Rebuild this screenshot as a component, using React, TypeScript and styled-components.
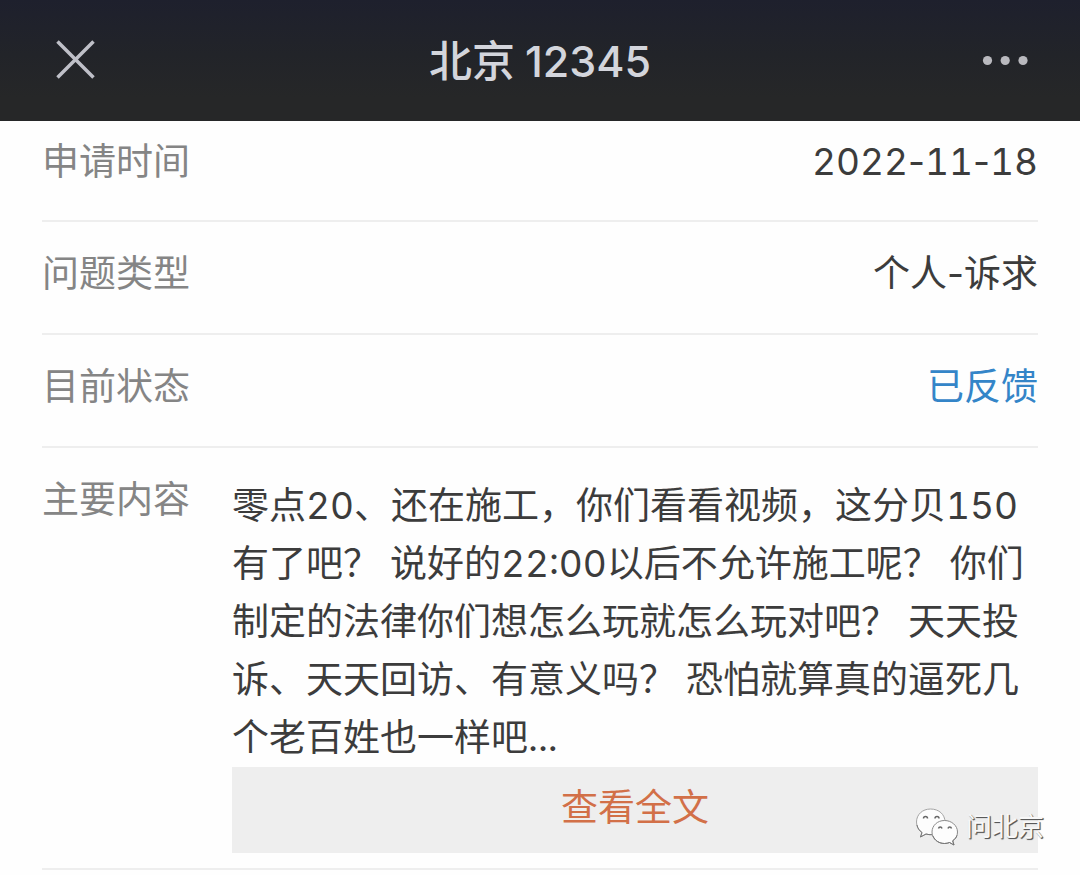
import React from "react";
import styled, { createGlobalStyle } from "styled-components";

const GlobalStyle = createGlobalStyle`
  * { box-sizing: border-box; }
  body {
    margin: 0;
    background: #fefefe;
    color: #3c3c3c;
    font-family: Inter, "Noto Sans CJK SC", sans-serif;
    font-size: 37px;
    line-height: 56px;
  }
`;

const Header = styled.header`
  display: grid;
  grid-template-columns: 1fr auto 1fr;
  align-items: center;
  height: 121px;
  padding: 0 48px;
  background: linear-gradient(#1e202d 0, #222429 45%, #262728 80%);
  color: #d3d5dc;
`;

const Title = styled.h1`
  display: flex;
  gap: 10px;
  margin: 0;
  font-size: 43px;
  line-height: 60px;
  font-weight: 500;
`;

const IconButton = styled.button<{ $end?: boolean }>`
  display: flex;
  justify-self: ${(p) => (p.$end ? "end" : "start")};
  padding: 0;
  border: 0;
  background: none;
  color: ${(p) => (p.$end ? "#b9b9be" : "#bfc0c8")};
  cursor: pointer;
`;

const Details = styled.dl`
  margin: 0;
  padding: 0 42px;
`;

const Row = styled.div<{ $first?: boolean }>`
  display: flex;
  justify-content: space-between;
  padding: ${(p) => (p.$first ? "13px 0 30px" : "24px 0 31px")};
  border-bottom: 2px solid #eeeeee;
`;

const ContentRow = styled(Row)`
  padding-bottom: 15px;
  gap: 42px;
`;

const Label = styled.dt`
  flex: none;
  color: #858585;
`;

const Value = styled.dd<{ $accent?: boolean }>`
  margin: 0;
  color: ${(p) => (p.$accent ? "#3485c8" : "inherit")};
`;

const Digits = styled.span`
  font-variant-numeric: tabular-nums;
`;

const Content = styled.dd`
  position: relative;
  flex: 1;
  margin: 0;
  padding-top: 5px;
`;

const Message = styled.p`
  margin: 0;
  line-height: 58px;
  font-variant-numeric: tabular-nums;
`;

const MoreButton = styled.button`
  display: block;
  width: 100%;
  height: 86px;
  padding: 0 0 4px;
  border: 0;
  background: #eeeeee;
  color: #d27048;
  font: inherit;
  cursor: pointer;
`;

const Watermark = styled.div`
  position: absolute;
  right: -6px;
  bottom: 6px;
  display: flex;
  align-items: center;
  gap: 7px;
  color: #f8f8f8;
  font-size: 26px;
  line-height: 40px;
  text-shadow: 1px 1px 1px #555555, 1px 1px 0 #777777;
  pointer-events: none;
`;

const WeChatIcon = () => (
  <svg width="44" height="38" viewBox="0 0 44 38" aria-hidden="true">
    <g fill="#777777" stroke="#777777" strokeWidth="1" strokeLinejoin="round">
      <path d="M15.500 1C7.500 1 1.500 6.500 1.500 14c0 4.500 2 8 5.500 10.500L5.500 29l5.500-3c2 .6 4 .8 6 .7C26 26.500 30 20 30 14 30 6.500 24 1 15.500 1z" fill="#fdfdfd" stroke="#a4a4a4" />
      <path d="M2 17c.6 3.200 2.300 5.700 5 7.500L5.500 29l5.500-3c2 .6 4 .8 6 .7" fill="none" />
      <path d="M29.500 12.500C22.500 12.500 17 17.500 17 24s5.500 11.500 12.500 11.500c2 0 3.500-.4 5-1l4.500 2.500-1.300-4.200c3-2 4.800-5 4.800-8.800 0-6.500-6-11.500-13-11.500z" fill="#fdfdfd" stroke="#8a8a8a" />
      <path d="M18 28c2 4.600 6.300 7.500 11.500 7.500 2 0 3.500-.4 5-1l4.500 2.500-1.300-4.200c2-1.300 3.500-3.100 4.300-5.300" fill="none" />
    </g>
    <g fill="none" stroke="#666666" strokeWidth="1.500">
      <path d="M8.500 10.500a2 2 0 0 1 4 0M20 10.500a2 2 0 0 1 4 0" />
      <path d="M23.500 20.500a1.800 1.800 0 0 1 3.500 0M33 20.500a1.800 1.800 0 0 1 3.500 0" />
    </g>
  </svg>
);

export default function App() {
  return (
    <div lang="zh-CN">
      <GlobalStyle />
      <Header>
        <IconButton type="button" aria-label="关闭">
          <svg width="56" height="56" viewBox="0 0 56 56" aria-hidden="true">
            <path d="M9.500 8.500l36 36M45.500 8.500l-36 36" stroke="currentColor" strokeWidth="3.500" />
          </svg>
        </IconButton>
        <Title>
          <span>北京</span>
          <span>12345</span>
        </Title>
        <IconButton type="button" aria-label="更多" $end>
          <svg width="56" height="56" viewBox="0 0 56 56" fill="currentColor" aria-hidden="true">
            <circle cx="11.500" cy="27.500" r="4.600" />
            <circle cx="29.200" cy="27.500" r="4.600" />
            <circle cx="47" cy="27.500" r="4.600" />
          </svg>
        </IconButton>
      </Header>
      <main>
        <Details>
          <Row $first>
            <Label>申请时间</Label>
            <Value>
              <time dateTime="2022-11-18">
                <Digits>2022</Digits>-<Digits>11</Digits>-<Digits>18</Digits>
              </time>
            </Value>
          </Row>
          <Row>
            <Label>问题类型</Label>
            <Value>个人-诉求</Value>
          </Row>
          <Row>
            <Label>目前状态</Label>
            <Value $accent>已反馈</Value>
          </Row>
          <ContentRow>
            <Label>主要内容</Label>
            <Content>
              <Message>
                零点20、还在施工，你们看看视频，这分贝150有了吧？ 说好的22:00以后不允许施工呢？ 你们制定的法律你们想怎么玩就怎么玩对吧？ 天天投诉、天天回访、有意义吗？ 恐怕就算真的逼死几个老百姓也一样吧...
              </Message>
              <MoreButton type="button">查看全文</MoreButton>
              <Watermark>
                <WeChatIcon />
                <span>问北京</span>
              </Watermark>
            </Content>
          </ContentRow>
        </Details>
      </main>
    </div>
  );
}
